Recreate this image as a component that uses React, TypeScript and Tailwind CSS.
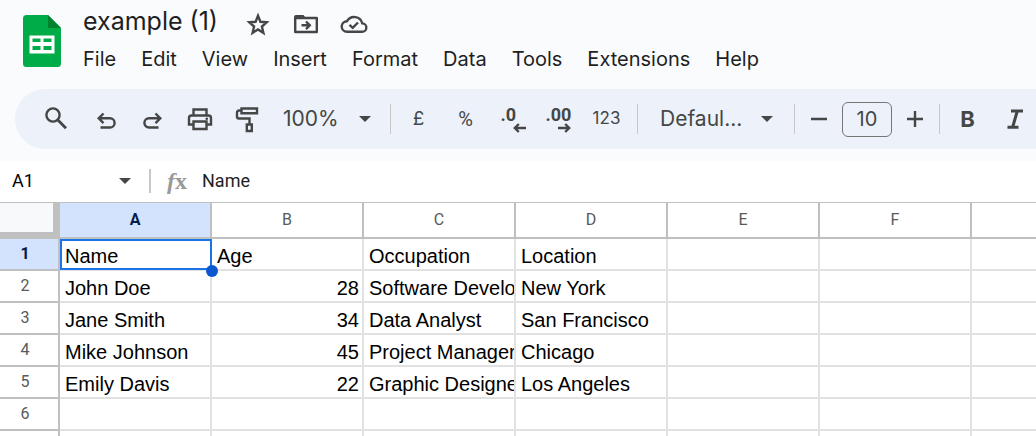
import React, { useState } from "react";

const columns = ["A", "B", "C", "D", "E", "F", "G"];
const rows = [
  ["Name", "Age", "Occupation", "Location"],
  ["John Doe", "28", "Software Developer", "New York"],
  ["Jane Smith", "34", "Data Analyst", "San Francisco"],
  ["Mike Johnson", "45", "Project Manager", "Chicago"],
  ["Emily Davis", "22", "Graphic Designer", "Los Angeles"],
  [],
  [],
];
const menus = ["File", "Edit", "View", "Insert", "Format", "Data", "Tools", "Extensions", "Help"];

function Icon({ children }: any) {
  return (
    <svg
      viewBox="0 0 28 28"
      className="h-7 w-7 shrink-0"
      fill="none"
      stroke="currentColor"
      strokeWidth="2.4"
      aria-hidden="true"
    >
      {children}
    </svg>
  );
}

function ToolButton({ label, children }: any) {
  return (
    <button type="button" aria-label={label} className="flex h-10 w-[47px] shrink-0 items-center justify-center">
      {children}
    </button>
  );
}

function Caret() {
  return (
    <svg viewBox="0 0 12 6" className="pointer-events-none h-[6px] w-3 shrink-0" fill="#444746" aria-hidden="true">
      <path d="M0 0h12L6 6z" />
    </svg>
  );
}

function Divider() {
  return <div className="h-[30px] w-px shrink-0 bg-[#c7c7c7]" />;
}

function SheetsLogo() {
  return (
    <svg viewBox="0 0 38 52" className="h-[52px] w-[38px] shrink-0" aria-hidden="true">
      <path d="M3.500 0H25l13 13v35.500a3.500 3.500 0 0 1-3.500 3.500h-31A3.500 3.500 0 0 1 0 48.500v-45A3.500 3.500 0 0 1 3.500 0z" fill="#00ac47" />
      <path d="M25 0l13 13H25z" fill="#00832d" />
      <path d="M6.500 20.500h25v18h-25zM9.500 23.500v3.500h8v-3.500zM20.500 23.500v3.500h8v-3.500zM9.500 31v4h8v-4zM20.500 31v4h8v-4z" fill="#fff" fillRule="evenodd" />
    </svg>
  );
}

function Header() {
  return (
    <header className="flex gap-[22px] pl-[23px] text-black">
      <div className="pt-[15px]">
        <SheetsLogo />
      </div>
      <div className="pt-1">
        <div className="flex h-9 items-center text-[#444746]">
          <h1 className="pr-[26px] text-[25px] text-[#1f1f1f]">example (1)</h1>
          <div className="flex gap-5 pt-1">
            <button type="button" aria-label="Star">
              <Icon>
                <path d="M14 5.800l2.400 6 6.300.500-4.800 4.200 1.500 6.300-5.400-3.400-5.400 3.400 1.500-6.300-4.800-4.200 6.300-.5z" />
              </Icon>
            </button>
            <button type="button" aria-label="Move">
              <Icon>
                <path d="M3.200 8h21.600v14H3.200z" strokeLinejoin="round" />
                <path d="M4 5h7.500l3 4H2V7a2 2 0 0 1 2-2z" fill="currentColor" stroke="none" />
                <path d="M9.500 15.300h7.500M14 11.500l3.800 3.800L14 19.100" />
              </Icon>
            </button>
            <button type="button" aria-label="See document status">
              <Icon>
                <path d="M7 21.800h15a4.200 4.200 0 0 0 .3-8.400A8.300 8.300 0 0 0 7 11.200a5.300 5.300 0 0 0 0 10.600z" />
                <path d="M9.500 14.800l3.200 3 5.300-5.300" />
              </Icon>
            </button>
          </div>
        </div>
        <nav className="flex gap-[25px] pt-1 text-xl leading-[30px] text-[#1f1f1f]">
          {menus.map((item) => (
            <button type="button" key={item}>
              {item}
            </button>
          ))}
        </nav>
      </div>
    </header>
  );
}

function Toolbar() {
  return (
    <div className="ml-[15px] flex h-[60px] items-center overflow-hidden rounded-l-full bg-[#edf1fa] pl-[17px] text-[#444746]">
      <ToolButton label="Search the menus">
        <Icon>
          <circle cx="11" cy="10" r="6.600" />
          <path d="M15.600 14.800l8.400 8.400" strokeWidth="2.800" />
        </Icon>
      </ToolButton>
      <div className="flex shrink-0 pl-[3px]">
        <ToolButton label="Undo">
          <Icon>
            <path d="M8.500 22.500h9.500a4.600 4.600 0 0 0 0-9.200H7M11.500 8.500L6.700 13.300l4.800 4.800" />
          </Icon>
        </ToolButton>
        <ToolButton label="Redo">
          <Icon>
            <path d="M19.500 22.500H10a4.600 4.600 0 0 1 0-9.200H21M16.500 8.500l4.800 4.800-4.800 4.800" />
          </Icon>
        </ToolButton>
        <ToolButton label="Print">
          <Icon>
            <path d="M7 19.500H3V13a2.500 2.500 0 0 1 2.500-2.500h17A2.500 2.500 0 0 1 25 13v6.500h-4M7.500 10V4.500h13V10M7.500 16.500h13V24h-13z" />
            <circle cx="20.800" cy="13.700" r="1.300" fill="currentColor" stroke="none" />
          </Icon>
        </ToolButton>
        <ToolButton label="Paint format">
          <Icon>
            <path d="M8.500 3.500H24v4.800H8.500zM8.500 5.500H6A2 2 0 0 0 4 7.500v4a2 2 0 0 0 2 2h10.500V19M13.800 19.500h5v6.500h-5z" />
          </Icon>
        </ToolButton>
      </div>
      <div className="flex w-[102px] shrink-0 items-center pl-[13px]">
        <select aria-label="Zoom" className="w-[76px] appearance-none bg-transparent text-[21px]">
          <option>100%</option>
        </select>
        <Caret />
      </div>
      <div className="w-[18px] shrink-0" />
      <Divider />
      <div className="flex shrink-0 pl-1">
        <ToolButton label="Format as currency">
          <span className="text-[19px]">£</span>
        </ToolButton>
        <ToolButton label="Format as percent">
          <span className="font-[Roboto] text-xl">%</span>
        </ToolButton>
        <ToolButton label="Decrease decimal places">
          <div className="flex w-7 flex-col items-start pl-[2px]">
            <span className="font-[Roboto] text-lg leading-[18px] font-bold">.0</span>
            <svg viewBox="0 0 13 10" className="-mt-px ml-3 h-[10px] w-[13px]" fill="none" stroke="currentColor" strokeWidth="2.4" aria-hidden="true">
              <path d="M13 5H2.500M5.800 1L1.800 5l4 4" />
            </svg>
          </div>
        </ToolButton>
        <ToolButton label="Increase decimal places">
          <div className="flex w-7 flex-col items-start">
            <span className="font-[Roboto] text-lg leading-[18px] font-bold">.00</span>
            <svg viewBox="0 0 13 10" className="-mt-px ml-3 h-[10px] w-[13px]" fill="none" stroke="currentColor" strokeWidth="2.4" aria-hidden="true">
              <path d="M0 5h10.500M7.200 1l4 4-4 4" />
            </svg>
          </div>
        </ToolButton>
        <ToolButton label="More formats">
          <span className="text-[17px]">123</span>
        </ToolButton>
      </div>
      <div className="w-[7px] shrink-0" />
      <Divider />
      <div className="flex w-[156px] shrink-0 items-center pl-[22px]">
        <select aria-label="Font" className="w-[101px] appearance-none bg-transparent text-[21px]">
          <option>Defaul...</option>
        </select>
        <Caret />
      </div>
      <Divider />
      <ToolButton label="Decrease font size">
        <Icon>
          <path d="M6 14h16" />
        </Icon>
      </ToolButton>
      <input
        aria-label="Font size"
        defaultValue="10"
        className="h-[35px] w-[50px] shrink-0 rounded-md border border-[#747775] bg-transparent text-center text-xl outline-none"
      />
      <ToolButton label="Increase font size">
        <Icon>
          <path d="M5 14h16M13 6v16" />
        </Icon>
      </ToolButton>
      <Divider />
      <div className="flex shrink-0 pl-1">
        <ToolButton label="Bold">
          <span className="text-[22px] font-bold">B</span>
        </ToolButton>
        <ToolButton label="Italic">
          <Icon>
            <path d="M10 6h12M6.500 22.200h11M16.300 6l-4.600 16" strokeWidth="3" />
          </Icon>
        </ToolButton>
      </div>
    </div>
  );
}

function FormulaBar({ value, onChange }: any) {
  return (
    <div className="flex h-[42px] shrink-0 items-center border-b border-[#c0c0c0] bg-white pb-px pl-3">
      <input aria-label="Name box" defaultValue="A1" className="w-[107px] font-[Roboto] text-lg outline-none" />
      <button type="button" aria-label="Named ranges">
        <Caret />
      </button>
      <div className="mr-4 ml-[18px] h-6 w-[2px] shrink-0 bg-[#c7c7c7]" />
      <label htmlFor="formula" className="w-[35px] font-['Liberation_Serif',serif] text-2xl font-bold text-[#999]">
        <i>f</i>x
      </label>
      <input
        id="formula"
        value={value}
        onChange={(e) => onChange(e.target.value)}
        className="min-w-0 flex-1 font-[Roboto] text-lg text-[#1f1f1f] outline-none"
      />
    </div>
  );
}

function Grid({ first }: any) {
  return (
    <main className="min-h-0 flex-1 overflow-hidden bg-white">
      <table className="w-[1124px] table-fixed border-separate border-spacing-0 font-['Liberation_Sans',Arial,sans-serif] text-xl text-black">
        <thead>
          <tr className="h-9 font-[Roboto] text-base">
            <td className="w-[60px] border-r-[7px] border-b-[7px] border-[#c0c0c0] bg-[#f8f9fa]" />
            {columns.map((col, i) => (
              <th
                key={col}
                scope="col"
                className={
                  i === 0
                    ? "w-[152px] border-r-2 border-b-2 border-[#c0c0c0] bg-[#d3e3fd] p-0 font-bold text-[#041e49]"
                    : "w-[152px] border-r-2 border-b-2 border-[#c0c0c0] p-0 font-normal text-[#575a5a]"
                }
              >
                {col}
              </th>
            ))}
          </tr>
        </thead>
        <tbody>
          {rows.map((row, r) => (
            <tr key={r} className="h-8">
              <th
                scope="row"
                className={
                  r === 0
                    ? "border-r-2 border-b-2 border-[#c0c0c0] bg-[#d3e3fd] p-0 pr-2 font-[Roboto] text-base font-bold text-[#041e49]"
                    : "border-r-2 border-b-2 border-[#c0c0c0] p-0 pr-2 font-[Roboto] text-base font-normal text-[#575a5a]"
                }
              >
                {r + 1}
              </th>
              {columns.map((col, c) => (
                <td key={col} className="relative border-r-2 border-b-2 border-[#e1e1e1] p-0">
                  <div
                    className={
                      c === 1 && r > 0
                        ? "h-[30px] overflow-hidden pt-1 pr-[3px] text-right leading-[26px] whitespace-nowrap"
                        : "h-[30px] overflow-hidden pt-1 pl-[5px] leading-[26px] whitespace-nowrap"
                    }
                  >
                    {r === 0 && c === 0 ? first : row[c]}
                  </div>
                  {r === 0 && c === 0 && (
                    <>
                      <div className="absolute top-0 -right-[2px] -bottom-px left-0 border-2 border-[#1a73e8]" />
                      <div className="absolute -right-2 -bottom-2 z-10 h-3 w-3 rounded-full bg-[#0b57d0]" />
                    </>
                  )}
                </td>
              ))}
            </tr>
          ))}
        </tbody>
      </table>
    </main>
  );
}

function App() {
  const [first, setFirst] = useState("Name");

  return (
    <div className="flex h-screen flex-col overflow-hidden bg-[#f9fbfd] font-[Inter,sans-serif]">
      <div className="flex h-[161px] shrink-0 flex-col justify-between pb-3">
        <Header />
        <Toolbar />
      </div>
      <FormulaBar value={first} onChange={setFirst} />
      <Grid first={first} />
    </div>
  );
}

export default App;
